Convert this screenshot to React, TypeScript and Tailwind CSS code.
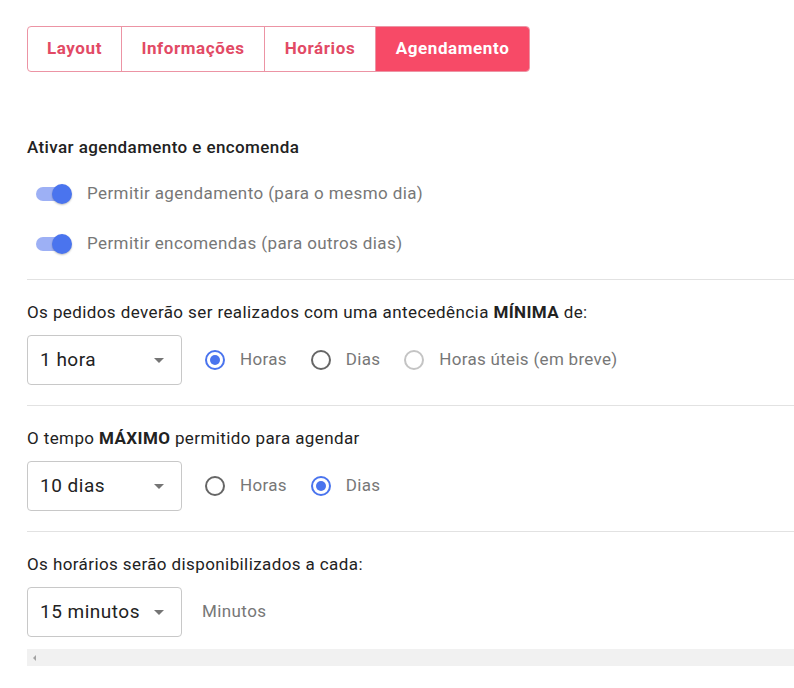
import { useState } from "react";

const tabs = ["Layout", "Informações", "Horários", "Agendamento"];

function Toggle({ label }: { label: string }) {
  return (
    <div className="flex h-[50px] items-center">
      <div className="relative ml-[9px] h-[14px] w-[34px] rounded-full bg-[#9db0f5]">
        <span className="absolute -top-[3px] right-[-2px] h-[20px] w-[20px] rounded-full bg-[#4a74ee] shadow-[0_1px_2px_rgba(0,0,0,0.25)]" />
      </div>
      <span className="ml-[17px] text-[17px] tracking-[0.4px] text-[#777]">
        {label}
      </span>
    </div>
  );
}

function Select({ value }: { value: string }) {
  return (
    <div className="flex h-[50px] w-[155px] shrink-0 items-center justify-between rounded-[4px] border border-[#c8c8c8] pl-[12px] pr-[17px]">
      <span className="text-[19px] tracking-[0.5px] text-[#222]">{value}</span>
      <span className="h-0 w-0 border-x-[5px] border-t-[5px] border-x-transparent border-t-[#757575]" />
    </div>
  );
}

function Radio({
  label,
  checked,
  disabled,
}: {
  label: string;
  checked?: boolean;
  disabled?: boolean;
}) {
  const ring = checked
    ? "border-[#4a74ee]"
    : disabled
      ? "border-[#c4c4c4]"
      : "border-[#666]";
  return (
    <div className="flex items-center">
      <span
        className={`flex h-[20px] w-[20px] items-center justify-center rounded-full border-2 ${ring}`}
      >
        {checked ? (
          <span className="h-[10px] w-[10px] rounded-full bg-[#4a74ee]" />
        ) : null}
      </span>
      <span className="ml-[15px] text-[17px] tracking-[0.3px] text-[#777]">
        {label}
      </span>
    </div>
  );
}

export default function App() {
  const [active] = useState(3);

  return (
    <div className="min-h-[688px] bg-white pl-[27px] pt-[26px] font-['Roboto',sans-serif]">
      <div className="flex h-[46px] w-[503px] overflow-hidden rounded-[4px] border border-[#ec94a4]">
        {tabs.map((t, i) => (
          <div
            key={t}
            className={`flex items-center justify-center text-[17px] font-bold tracking-[0.6px] ${
              i === active
                ? "bg-[#f74a67] text-white"
                : "border-r border-[#ec94a4] text-[#e24a65]"
            } ${["w-[94px]", "w-[143px]", "w-[111px]", "flex-1"][i]}`}
          >
            {t}
          </div>
        ))}
      </div>

      <h2 className="mt-[63px] text-[17px] leading-[24px] font-medium tracking-[0.4px] text-[#222]">
        Ativar agendamento e encomenda
      </h2>
      <div className="mt-[10px]">
        <Toggle label="Permitir agendamento (para o mesmo dia)" />
        <Toggle label="Permitir encomendas (para outros dias)" />
      </div>

      <div className="mt-[10px] border-t border-[#e2e2e2] pb-[20px] pt-[20px]">
        <p className="text-[17px] leading-[24px] tracking-[0.4px] text-[#222]">
          Os pedidos deverão ser realizados com uma antecedência{" "}
          <b className="font-bold">MÍNIMA</b> de:
        </p>
        <div className="mt-[11px] flex items-center gap-[23px]">
          <Select value="1 hora" />
          <div className="flex items-center gap-[24px]">
            <Radio label="Horas" checked />
            <Radio label="Dias" />
            <Radio label="Horas úteis (em breve)" disabled />
          </div>
        </div>
      </div>

      <div className="border-t border-[#e2e2e2] pb-[20px] pt-[20px]">
        <p className="text-[17px] leading-[24px] tracking-[0.4px] text-[#222]">
          O tempo <b className="font-bold">MÁXIMO</b> permitido para agendar
        </p>
        <div className="mt-[11px] flex items-center gap-[23px]">
          <Select value="10 dias" />
          <div className="flex items-center gap-[24px]">
            <Radio label="Horas" />
            <Radio label="Dias" checked />
          </div>
        </div>
      </div>

      <div className="border-t border-[#e2e2e2] pt-[20px]">
        <p className="text-[17px] leading-[24px] tracking-[0.4px] text-[#222]">
          Os horários serão disponibilizados a cada:
        </p>
        <div className="mt-[11px] flex items-center gap-[20px]">
          <Select value="15 minutos" />
          <span className="text-[17px] tracking-[0.4px] text-[#777]">
            Minutos
          </span>
        </div>
      </div>

      <div className="mt-[12px] flex h-[17px] items-center bg-[#f1f1f1] pl-[6px]">
        <span className="h-0 w-0 border-y-[3px] border-r-[3px] border-y-transparent border-r-[#a3a3a3]" />
      </div>
    </div>
  );
}
